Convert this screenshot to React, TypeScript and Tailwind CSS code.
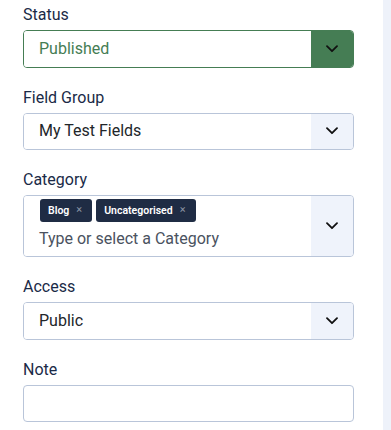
import React from "react";

const font = { fontFamily: "Roboto, 'Noto Sans', sans-serif" };

function Chevron() {
  return (
    <svg width="12" height="8" viewBox="0 0 12 8" fill="none">
      <path d="M1 1.2 6 6.2 11 1.2" stroke="#111" strokeWidth="1.8" strokeLinecap="round" strokeLinejoin="round" />
    </svg>
  );
}

function Label({ children }: { children: React.ReactNode }) {
  return <div className="text-[16px] leading-[24px] mb-[3px] text-[#1a2a47]">{children}</div>;
}

function Select({ value, green }: { value: string; green?: boolean }) {
  return (
    <div
      className={`flex h-[37.5px] rounded-[4px] border overflow-hidden ${
        green ? "border-[#457d54]" : "border-[#b9c5d9]"
      }`}
    >
      <div
        className={`flex-1 flex items-center pl-[15px] text-[16px] bg-white ${
          green ? "text-[#457d54]" : "text-[#22262a]"
        }`}
      >
        {value}
      </div>
      <div
        className={`w-[42px] flex items-center justify-center ${
          green ? "bg-[#457d54]" : "bg-[#eff3fb]"
        }`}
      >
        <Chevron />
      </div>
    </div>
  );
}

function Chip({ text }: { text: string }) {
  return (
    <span className="inline-flex items-center h-[23px] rounded-[3px] bg-[#1f2c44] pl-[8px] pr-[10px] text-[10.5px] font-semibold text-white">
      {text}
      <span className="ml-[7px] text-[11px] font-normal text-[#8b94a3]">×</span>
    </span>
  );
}

export default function App() {
  return (
    <div className="flex bg-white min-h-[430px]" style={font}>
      <div className="flex-1 pl-[23px] pr-[29px] pt-[3px]">
        <div className="flex flex-col gap-[18px]">
          <div>
            <Label>Status</Label>
            <Select value="Published" green />
          </div>
          <div>
            <Label>Field Group</Label>
            <Select value="My Test Fields" />
          </div>
          <div>
            <Label>Category</Label>
            <div className="flex h-[62px] rounded-[4px] border border-[#b9c5d9] overflow-hidden">
              <div className="flex-1 bg-white pl-[16px] pt-[3px]">
                <div className="flex gap-[4px]">
                  <Chip text="Blog" />
                  <Chip text="Uncategorised" />
                </div>
                <div className="text-[16px] leading-[24px] mt-[5px] -ml-[1px] text-[#4a5260]">
                  Type or select a Category
                </div>
              </div>
              <div className="w-[42px] flex items-center justify-center bg-[#eff3fb]">
                <Chevron />
              </div>
            </div>
          </div>
          <div>
            <Label>Access</Label>
            <Select value="Public" />
          </div>
          <div>
            <Label>Note</Label>
            <div className="h-[37.5px] rounded-[4px] border border-[#b9c5d9] bg-white" />
          </div>
        </div>
      </div>
      <div className="w-[8px] bg-[#eef2fa]" />
    </div>
  );
}
